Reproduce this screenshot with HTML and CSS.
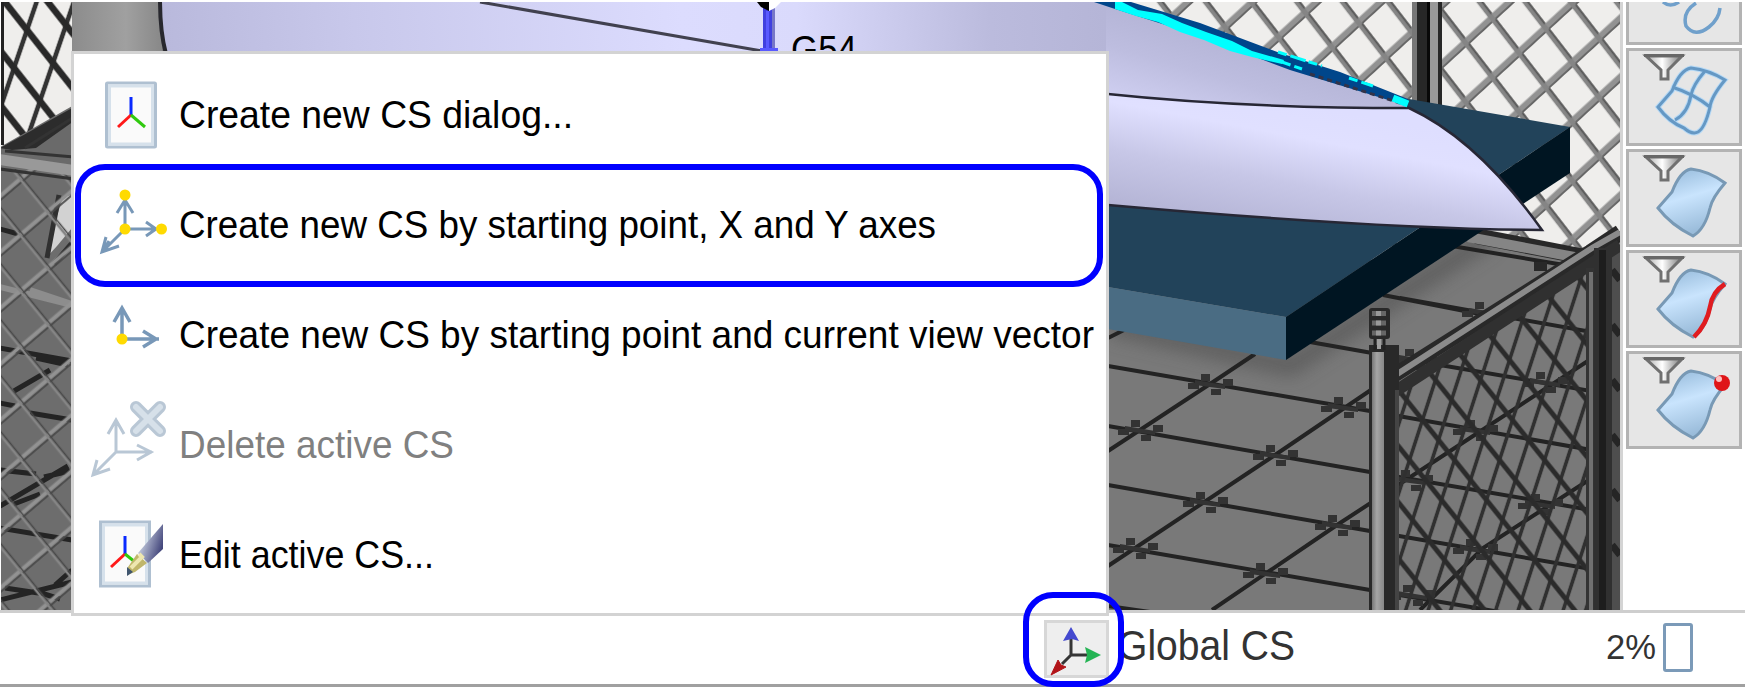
FILE: index.html
```html
<!DOCTYPE html>
<html lang="en">
<head>
<meta charset="utf-8">
<title>Coordinate systems</title>
<link rel="stylesheet" href="styles.css">
</head>
<body>
<div class="app">
  <main class="workspace">
    <svg class="scene" viewBox="1 2 1619 608" preserveAspectRatio="none">
      <defs>
        <pattern id="meshLight" width="100" height="100" patternUnits="userSpaceOnUse" patternTransform="matrix(.267 .345 .267 -.245 1465.3 72)">
          <path d="M50 0V100" stroke="#929292" stroke-width="16"/><path d="M57 0V100" stroke="#606060" stroke-width="4"/>
          <path d="M0 50H100" stroke="#858585" stroke-width="15"/><path d="M0 56H42M58 56H100" stroke="#555" stroke-width="5"/>
        </pattern>
        <pattern id="meshBlack" width="100" height="100" patternUnits="userSpaceOnUse" patternTransform="matrix(.26 .33 -.13 .38 20.5 -5.5)">
          <path d="M50 0V100" stroke="#333" stroke-width="13"/><path d="M0 50H100" stroke="#292929" stroke-width="20"/>
        </pattern>
        <pattern id="meshDark" width="100" height="100" patternUnits="userSpaceOnUse" patternTransform="matrix(.16 .2 -.13 .4 1469 450)">
          <path d="M50 0V100" stroke="#303030" stroke-width="17"/><path d="M0 50H100" stroke="#2b2b2b" stroke-width="14"/>
        </pattern>
        <pattern id="meshFloor" width="100" height="100" patternUnits="userSpaceOnUse" patternTransform="matrix(.27 .33 .27 -.23 -7 342)">
          <path d="M50 0V100" stroke="#929292" stroke-width="9"/><path d="M58 0V100" stroke="#484848" stroke-width="4"/>
          <path d="M0 50H100" stroke="#858585" stroke-width="7"/><path d="M0 57H100" stroke="#484848" stroke-width="4"/>
        </pattern>
        <linearGradient id="hull" x1="160" x2="1120" y1="0" y2="-60" gradientUnits="userSpaceOnUse">
          <stop offset="0" stop-color="#b9b9dc"/><stop offset=".2" stop-color="#c8c8eb"/><stop offset=".54" stop-color="#dcdcfe"/><stop offset=".66" stop-color="#dadafc"/><stop offset=".86" stop-color="#bbbbdd"/><stop offset="1" stop-color="#b4b4d6"/>
        </linearGradient>
        <linearGradient id="wing" x1="1180" x2="1155" y1="20" y2="105" gradientUnits="userSpaceOnUse">
          <stop offset="0" stop-color="#b4b4d6"/><stop offset=".5" stop-color="#bdbddf"/><stop offset="1" stop-color="#cdcdef"/>
        </linearGradient>
        <linearGradient id="flank" x1="1230" y1="90" x2="1205" y2="222" gradientUnits="userSpaceOnUse">
          <stop offset="0" stop-color="#dedeff"/><stop offset=".25" stop-color="#e0e0ff"/><stop offset=".6" stop-color="#c7c7e7"/><stop offset="1" stop-color="#b4b4d5"/>
        </linearGradient>
        <linearGradient id="wall"><stop offset="0" stop-color="#8c8c8c"/><stop offset=".6" stop-color="#a0a0a0"/><stop offset="1" stop-color="#888"/></linearGradient>
        <linearGradient id="tube"><stop offset="0" stop-color="#777"/><stop offset=".4" stop-color="#a5a5a5"/><stop offset="1" stop-color="#888"/></linearGradient>
        <filter id="soft" x="-20%" y="-40%" width="140%" height="180%"><feGaussianBlur stdDeviation="9"/></filter>
        <g id="clamp" fill="#333"><rect x="-9" y="-10" width="9" height="7"/><rect x="13" y="-5" width="10" height="7"/><rect x="-22" y="-1" width="11" height="6"/><rect x="1" y="5" width="10" height="6"/><path d="M-15-4L15 1V5L-15 1Z"/></g>
      </defs>

      <rect width="1620" height="612" fill="#797979"/>
      <rect x="1100" width="520" height="262" fill="#efeeec"/>
      <rect x="1100" width="520" height="262" fill="url(#meshLight)"/>

      <rect width="74" height="150" fill="#efeeec"/>
      <rect width="74" height="150" fill="url(#meshBlack)"/>
      <rect width="4" height="145" fill="#222"/>
      <rect x="72" width="90" height="54" fill="url(#wall)"/>

      <path d="M0 147L74 105V310H0Z" fill="#6a6a6a"/>
      <path d="M0 148L74 107V121L36 148L12 150Z" fill="#2c2c2c"/>
      <path d="M25 148L74 117M5 151L74 157" stroke="#333" stroke-width="3"/>
      <rect y="166" width="74" height="444" fill="#6d6d6d"/>
      <path d="M63 197L72 195V228L57 246L46 258L54 225Z" fill="#d2d2d2"/>
      <path d="M59 195L47 258M72 243L54 264" stroke="#303030" stroke-width="5"/>
      <g stroke="#242424" stroke-width="5">
        <path d="M0 229L22 235M0 348L72 361M30 413L72 420M0 470L36 474M0 528L72 540M5 588L45 594M36 358L68 365M14 391L50 370M0 506L68 466M14 504L40 494M0 600L72 582M44 477L70 471M38 592L60 599M0 403L15 406M55 585L72 570"/>
      </g>
      <path d="M30 290L72 304M0 287L72 305" stroke="#8d8d8d" stroke-width="6"/>
      <rect y="169" width="74" height="441" fill="url(#meshFloor)"/>
      <path d="M0 154L74 165V176L0 165Z" fill="#999"/>
      <path d="M0 169L74 179" stroke="#333" stroke-width="3"/>

      <path d="M1108 320L1480 235L1580 258L1620 240V610H1108Z" fill="#797979"/>
      <path d="M1110 325L1290 366L1490 236" fill="none" stroke="#4d4d4d" stroke-width="20" opacity=".6" filter="url(#soft)"/>
      <g fill="none" stroke="#232323" stroke-width="4">
        <path d="M1108 338L1124 330M1108 366L1370 411L1620 455M1108 426L1370 472L1620 515M1108 485L1370 531L1620 574M1108 545L1370 590L1500 612M1108 606L1150 612"/>
        <path d="M1310 342L1440 365L1620 396M1383 295L1485 315M1400 298L1484 313L1620 337"/>
        <path d="M1108 451L1210 384L1255 354M1108 566L1275 455L1393 375M1212 610L1337 525L1470 438L1620 340M1420 610L1483 548L1620 460M1370 395L1620 240"/>
      </g>
      <use href="#clamp" x="1210" y="384"/><use href="#clamp" x="1343" y="407"/><use href="#clamp" x="1140" y="430"/><use href="#clamp" x="1275" y="455"/><use href="#clamp" x="1205" y="502"/><use href="#clamp" x="1337" y="525"/><use href="#clamp" x="1135" y="548"/><use href="#clamp" x="1265" y="573"/><use href="#clamp" x="1414" y="359"/><use href="#clamp" x="1484" y="312"/><use href="#clamp" x="1545" y="382"/><use href="#clamp" x="1475" y="430"/><use href="#clamp" x="1540" y="504"/><use href="#clamp" x="1475" y="549"/><use href="#clamp" x="1410" y="480"/><use href="#clamp" x="1412" y="595"/>

      <path d="M1396 392L1592 262V610H1396Z" fill="url(#meshDark)"/>
      <path d="M1612 250H1620V610H1612Z" fill="#4e4e4e"/><path d="M1612 270L1620 280M1612 325L1620 335M1612 380L1620 390M1612 435L1620 445M1612 490L1620 500M1612 545L1620 555" stroke="#252525" stroke-width="7"/>
      <path d="M1476 236L1590 258" stroke="#282828" stroke-width="16"/>
      <path d="M1468 237L1585 259" stroke="#858585" stroke-width="10"/>
      <path d="M1452 246L1570 266" stroke="#222" stroke-width="4"/>
      <rect x="1534" y="262" width="13" height="9" fill="#292929"/>
      <path d="M1388 379L1590 252L1620 232" stroke="#292929" stroke-width="15" fill="none"/>
      <path d="M1388 380L1592 248L1620 232" stroke="#8b8b8b" stroke-width="6" fill="none"/>
      <path d="M1388 396L1620 245" stroke="#303030" stroke-width="12"/>
      <rect x="1586" y="268" width="9" height="342" fill="#333"/><rect x="1589" y="272" width="4" height="338" fill="#707070"/>
      <rect x="1594" y="248" width="18" height="362" fill="#303030"/><rect x="1599" y="250" width="7" height="360" fill="#1d1d1d"/>
      <rect x="1369" y="345" width="30" height="265" fill="#292929"/><rect x="1372" y="352" width="12" height="258" fill="url(#tube)"/><rect x="1395" y="390" width="4" height="220" fill="#444"/>
      <rect x="1369" y="308" width="21" height="31" rx="3" fill="#292929"/><path d="M1372 313.500H1386M1372 323H1386M1372 333H1386" stroke="#666" stroke-width="5"/><path d="M1376 313.500H1381M1376 323H1381M1376 333H1381" stroke="#999" stroke-width="5"/><path d="M1379 339V349" stroke="#a0a0a0" stroke-width="4"/><path d="M1375 339V350M1384 339V350" stroke="#222" stroke-width="3"/>

      <rect x="1412" width="30" height="110" fill="#272727"/><rect x="1412" width="5" height="110" fill="#777"/><rect x="1427" width="3" height="110" fill="#080808"/><rect x="1430" width="8" height="110" fill="#999"/>

      <path d="M1108 200L1409 99L1570 127L1286 317L1108 287Z" fill="#22435a"/>
      <path d="M1108 287L1286 317V360L1108 329Z" fill="#4a6c83"/>
      <path d="M1286 317L1570 127V173L1286 360Z" fill="#001522"/>

      <path d="M160 0H1120L1410 108L1108 94V60H168Q160 30 160 0Z" fill="url(#hull)"/>
      <path d="M1106 0H1116L1410 108Q1240 112 1106 97Z" fill="url(#wing)"/>
      <path d="M1108 94Q1240 108 1409 108Q1478 140 1542 230Q1380 229 1108 205Z" fill="url(#flank)"/>
      <path d="M1108 94Q1240 108 1409 108Q1478 140 1542 230Q1380 229 1108 205" fill="none" stroke="#272735" stroke-width="2.5"/>
      <path d="M160 0Q160 32 166 54" fill="none" stroke="#28282e" stroke-width="4"/>
      <path d="M480 2L762 51" stroke="#41414f" stroke-width="3"/>
      <path d="M1094 2H1131L1200 23L1280 53L1340 72L1408 99V106L1385 99L1290 70L1200 36L1112 8Z" fill="#00468b"/>
      <path d="M1115 2H1122L1138 10L1162 14L1182 23L1206 32L1232 41L1252 51L1284 60L1282 64L1252 57L1230 51L1204 40L1180 32L1158 22L1136 16L1115 9Z" fill="#00ffff"/>
      <path d="M1310 74L1400 103" stroke="#333348" stroke-width="3" stroke-dasharray="5 4"/>
      <path d="M1278 52L1322 66M1349 78L1373 86M1282 62L1302 69" stroke="#00ffff" stroke-width="3" stroke-dasharray="9 4 16 3"/><path d="M1393 98L1408 104" stroke="#00ffff" stroke-width="7"/>
      <rect x="763" y="7" width="12" height="44" fill="#4040df"/><rect x="766" y="11" width="3" height="40" fill="#5959ff"/><rect x="772" y="8" width="3" height="43" fill="#7777c8"/><rect x="760" y="48" width="18" height="3" fill="#5959ff"/>
      <path d="M757 2H769V11L761 7Z" fill="#000"/><path d="M769 2H781L775 8L769 11Z" fill="#fff"/>
      <text x="791" y="62.500" class="work-offset" textLength="66" lengthAdjust="spacingAndGlyphs">G54</text>
    </svg>

    <aside class="filters">
      <svg width="0" height="0" class="symbols">
        <defs>
          <linearGradient id="sheetFill" x1=".3" y1="0" x2=".6" y2="1"><stop offset="0" stop-color="#99bddd"/><stop offset=".42" stop-color="#c9e4fd"/><stop offset="1" stop-color="#93b6d5"/></linearGradient>
          <linearGradient id="metal"><stop offset="0" stop-color="#aaa"/><stop offset=".45" stop-color="#fff"/><stop offset="1" stop-color="#777"/></linearGradient>
          <symbol id="funnel" viewBox="0 0 116 98"><path d="M20 8H56L42 22V31H35V22Z" fill="url(#metal)" stroke="#707070" stroke-width="3"/><path d="M18 7.5H58" stroke="#686868" stroke-width="3"/></symbol>
          <symbol id="sheet" viewBox="0 0 116 98"><path d="M32 59L46 43Q54 22 65 20Q83 22 99 34Q86 49 84 59Q79 80 67 87Q45 76 32 59Z" fill="url(#sheetFill)" stroke="#7899b5" stroke-width="3"/></symbol>
        </defs>
      </svg>
      <button class="filter filter-cut"><svg viewBox="0 0 116 98"><path d="M37 55Q44 61 53 55M70 56Q56 65 60 79Q69 91 83 80Q93 72 94 61" fill="none" stroke="#70a0cb" stroke-width="3.5"/></svg></button>
      <button class="filter"><svg viewBox="0 0 116 98"><use href="#funnel"/><path d="M32 59L46 43Q54 22 65 20Q83 22 99 32Q85 49 84 59Q79 80 72 84Q66 87 58 80Q43 74 32 59ZM46 39Q68 46 84 59M79 23Q67 37 65 47Q62 65 49 72" fill="none" stroke="#b4d8f5" stroke-width="5"/><path d="M32 59L46 43Q54 22 65 20Q83 22 99 32Q85 49 84 59Q79 80 72 84Q66 87 58 80Q43 74 32 59ZM46 39Q68 46 84 59M79 23Q67 37 65 47Q62 65 49 72" fill="none" stroke="#6598c4" stroke-width="3"/></svg></button>
      <button class="filter"><svg viewBox="0 0 116 98"><use href="#funnel"/><use href="#sheet"/></svg></button>
      <button class="filter"><svg viewBox="0 0 116 98"><use href="#funnel"/><use href="#sheet"/><path d="M99 34Q86 42 84 57Q81 74 68 87" fill="none" stroke="#e01c20" stroke-width="4.5"/></svg></button>
      <button class="filter"><svg viewBox="0 0 116 98"><use href="#funnel"/><use href="#sheet"/><circle cx="96" cy="32" r="8" fill="#df1519"/><circle cx="93" cy="28" r="3" fill="#ffc1c1"/></svg></button>
    </aside>
  </main>

  <footer class="status">
    <button class="cs-button"><svg width="63" height="57" viewBox="0 0 63 57"><path d="M26 15V34H44M26 34L17 43" fill="none" stroke="#353535" stroke-width="3"/><path d="M26 6L34 20L27 18L18 20Z" fill="#4449cf"/><path d="M56 34L40 42L42 34L40 26Z" fill="#24b454"/><path d="M6 54L13 39L16 44L21 46Z" fill="#b21418" stroke="#b21418" stroke-width="1"/></svg></button>
    <svg class="cs-name" width="184" height="50"><text x="0" y="40" textLength="178" lengthAdjust="spacingAndGlyphs">Global CS</text></svg>
    <div class="progress">
      <svg class="percent" width="52" height="50"><text x="0" y="39" textLength="50" lengthAdjust="spacingAndGlyphs">2%</text></svg>
      <span class="meter"></span>
    </div>
    <span class="ring ring-button"></span>
  </footer>

  <nav class="menu">
    <div class="item"><svg class="icon" viewBox="0 0 80 80"><rect x="23.500" y="9" width="49" height="64" rx="1" fill="#fafafa" stroke="#afc0d1" stroke-width="3"/><rect x="26.500" y="12" width="43" height="58" fill="none" stroke="#d6e1eb" stroke-width="3"/><path d="M48 23V41" stroke="#0929ff" stroke-width="3"/><path d="M48 41L35 53" stroke="#ff1919" stroke-width="3"/><path d="M48 41L62 53" stroke="#2fc90e" stroke-width="3"/></svg><svg class="label"><text x="0" y="54.500" textLength="394" lengthAdjust="spacingAndGlyphs">Create new CS dialog...</text></svg></div>
    <div class="item"><svg class="icon" viewBox="0 0 80 80"><path d="M42 12V45H78M42 45L19 68M34 29L42 16L50 29M63 38L73 45L63 52M23 53L19 68L36 62M19 68L26 57" fill="none" stroke="#7898b8" stroke-width="3"/><g fill="#ffda00"><circle cx="42" cy="11" r="5.500"/><circle cx="42" cy="45" r="5.500"/><circle cx="78.500" cy="45" r="5.500"/></g></svg><svg class="label"><text x="0" y="54.500" textLength="757" lengthAdjust="spacingAndGlyphs">Create new CS by starting point, X and Y axes</text></svg></div>
    <div class="item"><svg class="icon" viewBox="0 0 80 80"><path d="M39 45V14M31 28L39 14L47 28M39 45H76M60 37L73 45L60 53" fill="none" stroke="#7898b8" stroke-width="3.500"/><circle cx="39" cy="45" r="5.500" fill="#ffda00"/></svg><svg class="label"><text x="0" y="54.500" textLength="915" lengthAdjust="spacingAndGlyphs">Create new CS by starting point and current view vector</text></svg></div>
    <div class="item disabled"><svg class="icon" viewBox="0 0 80 80"><path d="M33 16V48H69M33 48L10 71M25 30L33 16L41 30M54 41L68 48L54 56M14 56L10 71L27 65" fill="none" stroke="#b9c7d5" stroke-width="3"/><path d="M53 3L77 27M77 3L53 27" stroke="#b9c7d5" stroke-width="12" stroke-linecap="round"/><path d="M53 3L77 27M77 3L53 27" stroke="#d6e0e9" stroke-width="6" stroke-linecap="round"/></svg><svg class="label"><text x="0" y="54.500" textLength="275" lengthAdjust="spacingAndGlyphs">Delete active CS</text></svg></div>
    <div class="item"><svg class="icon" viewBox="0 0 80 80"><defs><linearGradient id="pen" y1="0" x2="1" y2=".5"><stop offset=".2" stop-color="#d2dae8"/><stop offset="1" stop-color="#45487d"/></linearGradient></defs><rect x="17.500" y="8" width="49" height="64" fill="#fafafa" stroke="#afc0d1" stroke-width="3"/><rect x="20.500" y="11" width="43" height="58" fill="none" stroke="#d6e1eb" stroke-width="3"/><path d="M42 22V40" stroke="#0929ff" stroke-width="3"/><path d="M42 40L28 53" stroke="#ff1919" stroke-width="3"/><path d="M42 40L52 48" stroke="#2fc90e" stroke-width="3"/><path d="M80 10V35L65 49L55 39Z" fill="url(#pen)"/><path d="M54 40L64 49L52 58L44 61L45 53Z" fill="#c0b66b"/><path d="M56 40L59 43L48 54" stroke="#eee7b0" stroke-width="4" fill="none"/><path d="M44 53L50 58L44 62Z" fill="#40566e"/></svg><svg class="label"><text x="0" y="54.500" textLength="255" lengthAdjust="spacingAndGlyphs">Edit active CS...</text></svg></div>
    <span class="ring ring-item"></span>
  </nav>
</div>
</body>
</html>
```
FILE: styles.css
```css
* { box-sizing: border-box; }
body { margin: 0; background: #fff; font-family: "Liberation Sans", Arial, sans-serif; overflow: hidden; }
button { margin: 0; padding: 0; font: inherit; }
.app { position: relative; display: flex; flex-direction: column; width: 1745px; height: 691px; overflow: hidden; }
.workspace { display: flex; flex: none; height: 613px; padding: 2px 3px 0 1px; border-bottom: 3px solid #cecece; }
.scene { flex: none; width: 1619px; height: 608px; display: block; }
.work-offset { font-size: 38px; fill: #000; }
.filters { flex: 1; display: flex; flex-direction: column; gap: 3px; border-left: 3px solid #d4d4d4; padding-left: 3px; overflow: hidden; }
.symbols { position: absolute; }
.filter { flex: none; width: 116px; height: 98px; border: 3px solid #b3b3b3; background: #e6e6e6; }
.filter svg { display: block; width: 116px; height: 98px; margin: -3px; }
.filter-cut { margin-top: -55px; }
.status { position: relative; z-index: 2; flex: none; display: flex; height: 74px; padding: 7px 52px 0 1044px; border-bottom: 3px solid #a0a0a0; }
.cs-button { flex: none; width: 65px; height: 58px; border: 3px solid #d7d7d7; background: #eee; }
.cs-button svg { display: block; margin: -2px; }
.cs-name { margin-left: 8px; font-size: 42px; fill: #333; overflow: visible; }
.progress { display: flex; margin-left: auto; gap: 5px; }
.percent { font-size: 35px; fill: #333; overflow: visible; }
.meter { width: 30px; height: 49px; margin-top: 3px; border: 3px solid #7b9ab8; border-radius: 3px; }
.menu { position: absolute; left: 71px; top: 51px; width: 1038px; height: 565px; padding: 5px 0 0 9px; border: 3px solid #d3d3d3; background: #fff; }
.item { display: flex; height: 110.100px; padding-top: 14px; gap: 16px; }
.icon { flex: none; width: 80px; height: 80px; overflow: visible; margin-top: 1px; }
.label { flex: none; width: 930px; height: 80px; font-size: 39px; fill: #000; overflow: visible; }
.disabled .label { fill: #808080; }
.ring { position: absolute; border: 6px solid #00f; }
.ring-item { left: 1px; top: 110px; width: 1028px; height: 123px; border-radius: 30px; }
.ring-button { left: 1023px; top: -21px; width: 101px; height: 95px; border-radius: 30px; }
```
